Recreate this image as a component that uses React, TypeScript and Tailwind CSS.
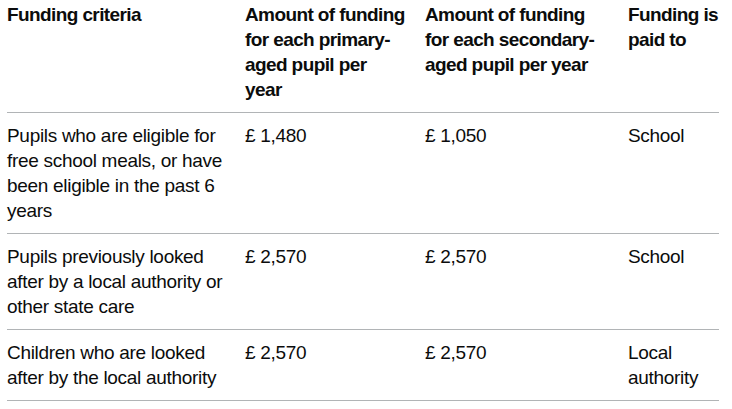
const rows = [
  {
    criteria: "Pupils who are eligible for free school meals, or have been eligible in the past 6 years",
    primary: "£ 1,480",
    secondary: "£ 1,050",
    paidTo: "School",
  },
  {
    criteria: "Pupils previously looked after by a local authority or other state care",
    primary: "£ 2,570",
    secondary: "£ 2,570",
    paidTo: "School",
  },
  {
    criteria: "Children who are looked after by the local authority",
    primary: "£ 2,570",
    secondary: "£ 2,570",
    paidTo: "Local authority",
  },
];

const App = () => {
  return (
    <div className="min-h-screen bg-white pl-[7px] font-['Liberation_Sans',Arial,sans-serif] text-[19px] leading-[25px] text-[#0b0c0c]">
      <table className="-mt-[8px] w-[712px] table-fixed border-collapse">
        <colgroup>
          <col className="w-[238px]" />
          <col className="w-[180px]" />
          <col className="w-[203px]" />
          <col className="w-[91px]" />
        </colgroup>
        <thead>
          <tr className="border-b border-[#b1b4b6] text-left align-top font-bold tracking-[-0.6px]">
            <th className="py-2.5 pr-4 whitespace-nowrap">Funding criteria</th>
            <th className="py-2.5 pr-4 whitespace-nowrap">
              Amount of funding
              <br />
              for each primary-
              <br />
              aged pupil per
              <br />
              year
            </th>
            <th className="py-2.5 pr-4 whitespace-nowrap">
              Amount of funding
              <br />
              for each secondary-
              <br />
              aged pupil per year
            </th>
            <th className="py-2.5 whitespace-nowrap">
              Funding is
              <br />
              paid to
            </th>
          </tr>
        </thead>
        <tbody className="tracking-[-0.3px]">
          {rows.map((row) => (
            <tr key={row.criteria} className="border-b border-[#b1b4b6] align-top">
              <td className="py-2.5 pr-4">{row.criteria}</td>
              <td className="py-2.5 pr-4">{row.primary}</td>
              <td className="py-2.5 pr-4">{row.secondary}</td>
              <td className="py-2.5">{row.paidTo}</td>
            </tr>
          ))}
        </tbody>
      </table>
    </div>
  );
};

export default App;
